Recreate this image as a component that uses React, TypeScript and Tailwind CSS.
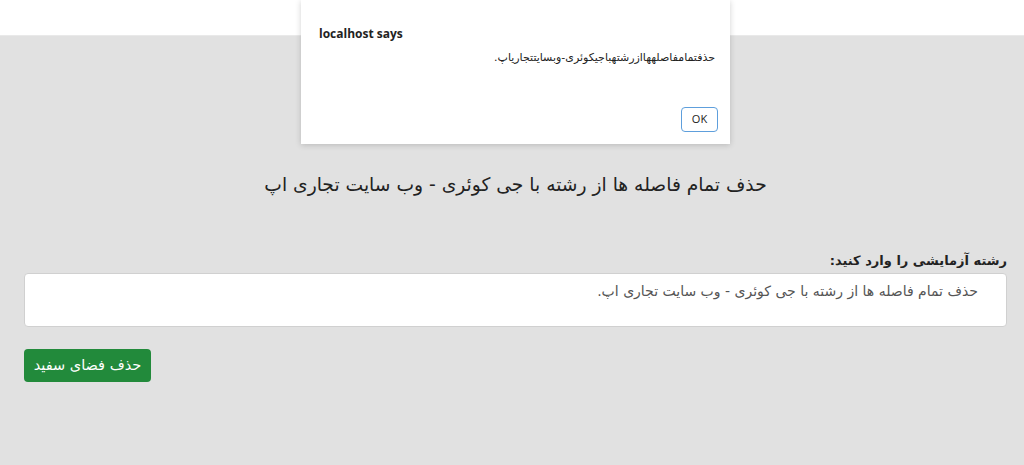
export default function App() {
  const arabic = "font-['DejaVu_Sans','Noto_Sans',sans-serif]";
  return (
    <div className="relative min-h-[465px] w-full bg-[#e1e1e1] overflow-hidden">
      {/* top white band */}
      <div className="h-[36px] bg-white border-b border-[#e9e9e9]" />

      <div dir="rtl" className={`pr-[17px] pl-[24px] ${arabic}`}>
        <h1 className="mt-[135px] text-center text-[18.7px] leading-[28px] text-[#222]">
          حذف تمام فاصله ها از رشته با جی کوئری - وب سایت تجاری اپ
        </h1>

        <label className="mt-[52px] block text-[13px] font-bold leading-[20px] text-[#222]">
          رشته آزمایشی را وارد کنید:
        </label>
        <textarea
          dir="rtl"
          readOnly
          defaultValue="حذف تمام فاصله ها از رشته با جی کوئری - وب سایت تجاری اپ."
          className={`mt-[2px] block h-[54px] w-full resize-none rounded-[4px] border border-[#d0d0d0] bg-white pt-[7px] pr-[28px] pl-3 text-[14px] leading-[20px] text-[#555] outline-none ${arabic}`}
        />

        <div className="mt-[22px] flex justify-end">
          <button className="h-[33px] w-[127px] rounded-[4px] bg-[#228a3b] text-[14.5px] text-white">
            حذف فضای سفید
          </button>
        </div>
      </div>

      {/* browser alert dialog */}
      <div className="absolute left-[301px] top-0 h-[144px] w-[429px] bg-white shadow-[0_1px_6px_rgba(0,0,0,0.18)] font-['Open_Sans','Liberation_Sans',sans-serif]">
        <div className="pl-[18px] pt-[25px] text-[12px] font-bold text-[#222]">localhost says</div>
        <div
          dir="rtl"
          className={`mt-[7px] pr-[15px] text-[11px] leading-[16px] text-[#222] ${arabic}`}
        >
          حذفتمامفاصلههاازرشتهباجیکوئری-وبسایتتجاریاپ.
        </div>
        <div className="absolute right-[12px] top-[105px]">
          <button className="h-[25px] w-[37px] rounded-[4px] border border-[#5e9fdc] bg-white text-[11px] text-[#222]">
            OK
          </button>
        </div>
      </div>
    </div>
  );
}
